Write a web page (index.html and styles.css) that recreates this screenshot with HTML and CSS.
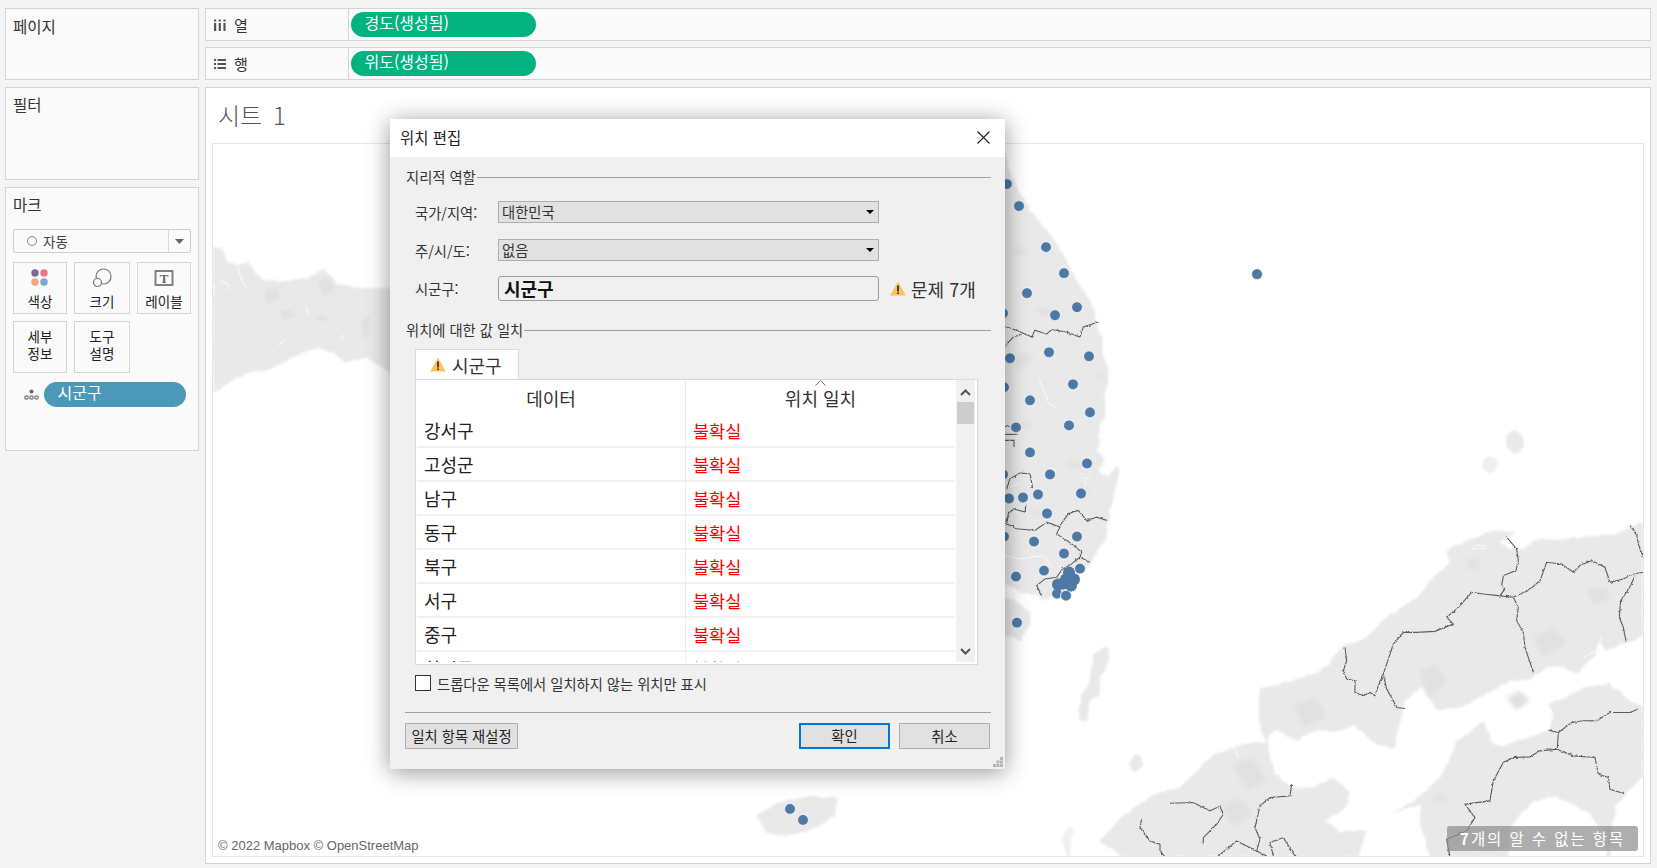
FILE: index.html
```html
<!DOCTYPE html>
<html lang="ko">
<head>
<meta charset="utf-8">
<title>위치 편집</title>
<link rel="stylesheet" href="styles.css">
</head>
<body>
<div class="app">
  <aside class="side">
    <section class="panel pages"><h2 class="panel-title">페이지</h2></section>
    <section class="panel filters"><h2 class="panel-title">필터</h2></section>
    <section class="panel marks">
      <h2 class="panel-title">마크</h2>
      <div class="mark-select">
        <span class="mark-circle"></span><span class="mark-select-text">자동</span>
        <span class="mark-caret"><svg width="9" height="5" viewBox="0 0 9 5"><path class="fill-gray" d="M0 0h9L4.500 5z"/></svg></span>
      </div>
      <div class="mark-grid">
        <div class="mark-btn">
          <svg class="mark-icon" width="20" height="20" viewBox="0 0 20 20"><circle cx="5" cy="5" r="3.700" fill="#7b6a96"/><circle cx="14" cy="5" r="3.700" fill="#f0708a"/><circle cx="5" cy="14" r="3.700" fill="#f2a67c"/><circle cx="14" cy="14" r="3.700" fill="#7fa6cf"/></svg>
          <span>색상</span>
        </div>
        <div class="mark-btn">
          <svg class="mark-icon" width="20" height="20" viewBox="0 0 20 20"><circle class="stroke-gray" cx="11.500" cy="8.500" r="7.500"/><circle class="stroke-gray white" cx="5.500" cy="14.500" r="4"/></svg>
          <span>크기</span>
        </div>
        <div class="mark-btn">
          <svg class="mark-icon" width="20" height="20" viewBox="0 0 20 20"><rect class="stroke-gray thick" x="1.500" y="3" width="17" height="14"/><text class="t-glyph" x="10" y="14.500">T</text></svg>
          <span>레이블</span>
        </div>
        <div class="mark-btn tall"><span>세부<br>정보</span></div>
        <div class="mark-btn tall"><span>도구<br>설명</span></div>
      </div>
      <div class="mark-field">
        <svg width="15" height="11" viewBox="0 0 15 11"><circle class="fill-gray" cx="7.500" cy="2.500" r="2"/><circle class="stroke-gray" cx="2.500" cy="8.500" r="1.700"/><circle class="stroke-gray" cx="7.500" cy="8.500" r="1.700"/><circle class="stroke-gray" cx="12.500" cy="8.500" r="1.700"/></svg>
        <span class="pill blue">시군구</span>
      </div>
    </section>
  </aside>

  <main class="main">
    <div class="shelf">
      <div class="shelf-label">
        <svg width="12" height="12" viewBox="0 0 12 12"><path class="fill-dark" d="M0 4h2.200v8H0zM4.700 4h2.200v8H4.700zM9.400 4h2.200v8H9.400zM0 .5h2.200v2H0zM4.700 .5h2.200v2H4.700zM9.400 .5h2.200v2H9.400z"/></svg>
        <span>열</span>
      </div>
      <span class="pill green">경도(생성됨)</span>
    </div>
    <div class="shelf">
      <div class="shelf-label">
        <svg width="12" height="12" viewBox="0 0 12 12"><path class="fill-dark" d="M0 1h2v2H0zM3.500 1H12v2H3.500zM0 5h2v2H0zM3.500 5H12v2H3.500zM0 9h2v2H0zM3.500 9H12v2H3.500z"/></svg>
        <span>행</span>
      </div>
      <span class="pill green">위도(생성됨)</span>
    </div>
    <section class="view">
      <h1 class="view-title">시트 1</h1>
      <div class="map">
        <svg class="map-svg" viewBox="213 144 1430 711" preserveAspectRatio="none">
          <defs>
            <filter id="soft" x="-5%" y="-5%" width="110%" height="110%"><feTurbulence type="fractalNoise" baseFrequency="0.12" numOctaves="2" seed="3" result="n"/><feDisplacementMap in="SourceGraphic" in2="n" scale="4" xChannelSelector="R" yChannelSelector="G" result="d"/><feGaussianBlur in="d" stdDeviation="0.8"/></filter>
            <filter id="softS" x="-5%" y="-5%" width="110%" height="110%"><feTurbulence type="fractalNoise" baseFrequency="0.04" numOctaves="2" seed="3" result="n"/><feDisplacementMap in="SourceGraphic" in2="n" scale="12" xChannelSelector="R" yChannelSelector="G" result="d"/><feGaussianBlur in="d" stdDeviation="2.400"/></filter>
            <filter id="blob" x="-30%" y="-30%" width="160%" height="160%"><feGaussianBlur stdDeviation="1.800"/></filter>
            <filter id="blobS" x="-30%" y="-30%" width="160%" height="160%"><feGaussianBlur stdDeviation="6"/></filter>
            <filter id="rough" x="-5%" y="-5%" width="110%" height="110%"><feTurbulence type="fractalNoise" baseFrequency="0.12" numOctaves="2" seed="4" result="n"/><feDisplacementMap in="SourceGraphic" in2="n" scale="8" xChannelSelector="R" yChannelSelector="G"/></filter>
          </defs>
          <!-- west coast -->
          <g filter="url(#soft)">
            <path class="land" d="M213 247L222 248 227 263 238 265 247 260 255 272 263 280 287 280 310 277 325 268 331 277 337 283 353 287 388 287 400 300 400 380 368 357 347 363 333 353 317 347 293 357 267 370 250 372 233 380 213 393Z"/>
          </g>
          <g filter="url(#blob)">
            <path class="land-dark" d="M265 290l12-3 3 12-14 4zM317 282l12-6 6 12-10 8zM280 310h12l4 6-14 2zM318 316q8-4 10 2-5 5-11 2zM362 320l8-4-2 22-6-2z"/>
          </g>
          <path class="river" d="M238 268l4 12 4 6M220 280l8 4 2 6M306 306l2 8M340 340l4-6M278 345l8-6"/>
          <!-- Korea -->
          <g transform="translate(1000 130) scale(.3333)">
            <g filter="url(#softS)">
              <path class="land" d="M-30 60L15 80 30 130 60 190 110 265 150 310 190 370 215 425 240 465 265 500 285 545 295 600 307 620 310 680 325 715 325 760 315 790 318 850 300 890 295 960 315 995 295 1020 320 1035 355 1005 360 1020 340 1100 325 1170 320 1225 290 1260 275 1295 240 1330 205 1370 170 1395 130 1410 110 1390 60 1385 20 1360-30 1360Z"/>
              <path class="land" d="M-30 1400L40 1405 85 1440 92 1480 60 1530 30 1515-30 1530Z"/>
            </g>
            <g filter="url(#blobS)">
              <path class="land-dark" d="M30 360q40-20 50 10-30 15-50-10zM110 540q30-20 40 10-20 20-40-10zM40 680q40-20 60-10-10 40-50 50zM290 730q20-5 30 10-10 15-30 5zM50 880q30-10 50 5-20 15-50 5zM200 1000q30-15 50 5-20 20-50-5zM90 1140q30-10 40 15-30 10-40-15zM230 1060q30 0 40 20-20 15-40-20z"/>
            </g>
            <path class="river" d="M118 750l12 30 10 20 6 20 30 15M245 1040q15 5 10 30M270 1040l-15 5M13 1275l50 10 65-10 30 35M30 1070l30-10"/>
          </g>
          <!-- Jeju and small islands -->
          <g filter="url(#soft)">
            <path class="land" d="M757 815L775 802 810 795 838 797 835 815 815 828 785 835 765 832Z"/>
            <ellipse class="land" cx="1515" cy="441" rx="9" ry="11"/>
            <ellipse class="land-light" cx="1490" cy="464" rx="8" ry="8"/>
          </g>
          <g transform="translate(1000 640) scale(.3333)" filter="url(#softS)">
            <path class="land" d="M320 15L332 30 322 70 300 110 300 160 270 180 262 240 235 238 242 165 268 125 280 40Z"/>
            <path class="land" d="M405 340L422 345 430 375 405 395 385 370Z"/>
            <path class="land-light" d="M205 560l15 5-10 80-10 5-15-55z"/>
          </g>
          <!-- Japan -->
          <g transform="translate(1200 510) scale(.3333)">
            <g filter="url(#softS)">
              <path class="land" d="M1330 30L1250 70 1120 82 1000 90 970 115 930 115 900 95 950 65 880 60 800 90 740 120 750 160 700 200 650 260 560 320 500 380 420 410 390 460 340 490 260 515 180 535 175 630 195 690 225 655 290 690 340 660 420 660 460 645 530 700 580 715 605 620 615 570 670 525 710 600 780 590 880 540 930 510 985 510 1040 470 1080 465 1130 490 1180 440 1200 395 1215 420 1330 375Z"/>
              <path class="land" d="M850 630L880 700 905 705 1050 660 1060 610 1045 580 1100 560 1150 530 1230 520 1290 570 1330 590 1330 795 1250 880 1238 950 1232 1038 1222 1038 1215 975 1170 910 1070 855 1000 870 930 950 925 1038 690 1038 660 940 660 880 570 910 640 870 720 800 755 730 770 690 800 670Z"/>
              <path class="land" d="M40 730L130 700 205 690 210 740 225 790 280 830 340 830 400 800 450 840 440 890 375 930 420 960 500 960 475 1038-230 1038-300 990-240 920-140 850-60 830Z"/>
            </g>
            <g filter="url(#blobS)">
              <path class="land-dark" d="M800 150l30-10 10 30-30 10zM660 480l50-20 30 60-60 40zM1160 240l60-10 10 40-50 10zM280 580l70-20 30 60-70 30zM920 560l40-20 30 30-40 30zM100 760l60-20 40 70-60 30zM700 850l35 0 5 20-35 5zM1000 380l60-30 40 50-70 40zM60 880l60-20 40 50-60 40z"/>
            </g>
            <path class="river" d="M815 115h40v-10h-30zM1150 440l40-20 15-40M100 705l15 35"/>
            <g class="borders" filter="url(#rough)">
              <polyline points="920,80 950,115 955,150 948,180 910,195 905,225 915,235 900,255"/>
              <polyline points="435,410 440,450 430,480 440,505 465,510 465,545 490,555 510,545 525,555 535,525 550,490 580,400 610,365 650,365 705,362 760,340 740,320 775,290 815,245 850,250 895,255 940,260 985,240 1020,210 1040,155 1085,160 1120,185 1140,165 1175,150 1215,170 1230,215 1270,205 1300,190 1330,185"/>
              <polyline points="550,490 560,535 580,570 590,590 615,593"/>
              <polyline points="940,260 955,290 950,330 970,365 975,410 985,440 1000,485"/>
              <polyline points="1290,45 1310,70 1315,100 1330,140"/>
              <polyline points="1305,195 1290,230 1262,270 1258,320 1270,350 1278,390"/>
              <polyline points="1315,595 1290,605 1230,605 1190,630 1150,630 1115,635 1075,665 1072,715 1020,720 990,738 940,740 910,755 880,810 870,870 795,880 825,920 800,960 740,985 750,1038"/>
              <polyline points="1045,658 1075,665"/>
              <polyline points="1072,715 1120,735 1185,740 1195,790 1225,800 1230,835 1272,848"/>
              <polyline points="275,820 270,855 210,860 180,885 165,950 180,985 170,1020"/>
              <polyline points="-90,877 -20,875 30,900 60,885 70,910 50,940 10,980 10,1000"/>
              <polyline points="-175,925 -180,950 -150,990 -120,1000 -120,1020 -105,1038"/>
              <polyline points="55,1035 80,1015 110,990 170,1020 200,1035"/>
              <polyline points="220,1035 210,995 250,980 285,1035"/>
            </g>
          </g>
          <g transform="translate(1000 130) scale(.3333)">
            <g class="borders" filter="url(#rough)">
              <polyline points="13,588 50,600 95,620 105,600 140,612 155,598 200,605 240,620 250,590 295,575"/>
              <polyline points="13,650 40,620 65,612"/>
              <polyline points="13,888 28,888"/>
              <polyline points="13,912 50,912"/>
              <polyline points="15,930 42,930 42,950"/>
              <polyline points="20,1075 30,1045 60,1028 90,1030 98,1075"/>
              <polyline points="78,1120 75,1145 40,1135 25,1150 20,1180 50,1195 105,1200 140,1175 180,1190 170,1210 215,1240 245,1265 240,1280 270,1295"/>
              <polyline points="180,1185 205,1150 235,1140 260,1170 290,1160 322,1170"/>
              <polyline points="240,1280 215,1300 185,1318 170,1340 135,1345 110,1365 125,1395"/>
              <polyline points="13,1175 25,1160"/>
            </g>
          </g>
          <!-- marks -->
          <g class="dots">
            <circle cx="1007" cy="184" r="5"/><circle cx="1019" cy="206" r="5"/><circle cx="1046" cy="247" r="5"/><circle cx="1064" cy="273" r="5"/><circle cx="1027" cy="293" r="5"/><circle cx="1055" cy="315" r="5"/><circle cx="1077" cy="307" r="5"/><circle cx="1003" cy="313" r="5"/><circle cx="1010" cy="358" r="5"/><circle cx="1049" cy="352" r="5"/><circle cx="1089" cy="356" r="5"/><circle cx="1073" cy="384" r="5"/><circle cx="1030" cy="400" r="5"/><circle cx="1004" cy="387" r="5"/><circle cx="1090" cy="412" r="5"/><circle cx="1069" cy="425" r="5"/><circle cx="1016" cy="427" r="5"/><circle cx="1030" cy="452" r="5"/><circle cx="1087" cy="463" r="5"/><circle cx="1050" cy="474" r="5"/><circle cx="1003" cy="474" r="5"/><circle cx="1038" cy="494" r="5"/><circle cx="1023" cy="497" r="5"/><circle cx="1009" cy="498" r="5"/><circle cx="1081" cy="493" r="5"/><circle cx="1047" cy="513" r="5"/><circle cx="1004" cy="536" r="5"/><circle cx="1034" cy="541" r="5"/><circle cx="1077" cy="536" r="5"/><circle cx="1064" cy="553" r="5"/><circle cx="1044" cy="570" r="5"/><circle cx="1016" cy="576" r="5"/><circle cx="1080" cy="568" r="5"/><circle cx="1057" cy="593" r="5"/><circle cx="1066" cy="595" r="5"/><circle cx="1017" cy="622" r="5"/><circle cx="1257" cy="274" r="5"/><circle cx="790" cy="808" r="5"/><circle cx="803" cy="819" r="5"/>
          </g>
          <g class="dots cluster">
            <circle cx="1058" cy="584" r="5"/><circle cx="1063" cy="583" r="5"/><circle cx="1066" cy="579" r="5"/><circle cx="1069" cy="572" r="5"/><circle cx="1074" cy="579" r="5"/><circle cx="1069" cy="581" r="5"/><circle cx="1071" cy="585" r="5"/>
          </g>
        </svg>
        <div class="attribution">© 2022 Mapbox © OpenStreetMap</div>
        <div class="unknown-badge"><b>7</b>개의 알 수 없는 항목</div>
      </div>
    </section>
  </main>
</div>

<div class="dialog">
  <header class="dialog-head">
    <span>위치 편집</span>
    <svg width="13" height="13" viewBox="0 0 13 13"><path class="stroke-black" d="M.5.500l12 12M12.500.500l-12 12"/></svg>
  </header>
  <div class="dialog-body">
    <div class="legend">지리적 역할</div>
    <div class="form-row first">
      <label>국가/지역:</label>
      <div class="combo">대한민국<svg width="8" height="4" viewBox="0 0 8 4"><path d="M0 0h8L4 4z"/></svg></div>
    </div>
    <div class="form-row second">
      <label>주/시/도:</label>
      <div class="combo">없음<svg width="8" height="4" viewBox="0 0 8 4"><path d="M0 0h8L4 4z"/></svg></div>
    </div>
    <div class="form-row third">
      <label>시군구:</label>
      <div class="textbox">시군구</div>
      <div class="issue">
        <svg class="warn" width="16" height="15" viewBox="0 0 16 15"><path fill="#fcc25e" d="M8 .500L15.800 14.500H.2z"/><path fill="#222" d="M7.200 4.500h1.600v6H7.200zM7.200 11.500h1.600v1.600H7.200z"/></svg>
        <span>문제 7개</span>
      </div>
    </div>
    <div class="legend second-legend">위치에 대한 값 일치</div>
    <div class="tab">
      <svg class="warn" width="16" height="15" viewBox="0 0 16 15"><path fill="#fcc25e" d="M8 .500L15.800 14.500H.2z"/><path fill="#222" d="M7.200 4.500h1.600v6H7.200zM7.200 11.500h1.600v1.600H7.200z"/></svg>
      <span>시군구</span>
    </div>
    <div class="match-table">
      <div class="match-list">
        <div class="match-head">
          <div>데이터</div>
          <div class="sorted"><svg class="sort-arrow" width="11" height="6" viewBox="0 0 11 6"><path class="stroke-thin" d="M.5 5.500l5-5 5 5"/></svg>위치 일치</div>
        </div>
        <div class="match-row"><div>강서구</div><div class="bad">불확실</div></div>
        <div class="match-row"><div>고성군</div><div class="bad">불확실</div></div>
        <div class="match-row"><div>남구</div><div class="bad">불확실</div></div>
        <div class="match-row"><div>동구</div><div class="bad">불확실</div></div>
        <div class="match-row"><div>북구</div><div class="bad">불확실</div></div>
        <div class="match-row"><div>서구</div><div class="bad">불확실</div></div>
        <div class="match-row"><div>중구</div><div class="bad">불확실</div></div>
        <div class="match-row"><div>창녕군</div><div class="bad">불확실</div></div>
      </div>
      <div class="scrollbar">
        <svg class="scroll-arrow" width="11" height="7" viewBox="0 0 11 7"><path class="stroke-arrow" d="M1 6l4.500-4.500L10 6"/></svg>
        <div class="scroll-thumb"></div>
        <svg class="scroll-arrow down" width="11" height="7" viewBox="0 0 11 7"><path class="stroke-arrow" d="M1 1l4.500 4.500L10 1"/></svg>
      </div>
    </div>
    <div class="check-row"><span class="checkbox"></span><span>드롭다운 목록에서 일치하지 않는 위치만 표시</span></div>
    <div class="rule"></div>
    <div class="actions">
      <button class="btn reset" type="button">일치 항목 재설정</button>
      <div class="actions-right">
        <button class="btn ok" type="button">확인</button>
        <button class="btn" type="button">취소</button>
      </div>
    </div>
    <svg class="grip" width="10" height="10" viewBox="0 0 10 10"><path fill="#b5b5b5" d="M7 0h3v3H7zM3.500 3.500h3v3h-3zM7 3.500h3v3H7zM0 7h3v3H0zM3.500 7h3v3h-3zM7 7h3v3H7z"/></svg>
  </div>
</div>
</body>
</html>
```

FILE: styles.css
```css
* { box-sizing: border-box; }
html, body { margin: 0; height: 100%; overflow: hidden; }
body {
  background: #f4f4f4;
  color: #222;
  font-family: "Noto Sans CJK KR", "Noto Sans", sans-serif;
  position: relative;
}
.app {
  display: flex;
  gap: 6px;
  height: 864px;
  padding: 8px 6px 0 5px;
}
.side { width: 194px; display: flex; flex-direction: column; gap: 7px; flex: none; }
.panel { background: #fafafa; border: 1px solid #d4d4d4; padding: 6px 7px; }
.pages { height: 72px; padding-top: 7px; }
.filters { height: 93px; }
.marks { height: 264px; }
.panel-title { margin: 0; font-size: 15.500px; font-weight: 400; line-height: 21px; color: #333; }

.mark-select {
  margin-top: 14px;
  height: 24px;
  width: 178px;
  border: 1px solid #cfcfcf;
  border-radius: 2px;
  display: flex;
  align-items: center;
  padding-left: 13px;
  font-size: 13.500px;
  color: #444;
}
.mark-circle { width: 10px; height: 10px; border: 1.500px solid #8c8c8c; border-radius: 50%; }
.mark-select-text { margin-left: 6px; line-height: 20px; }
.mark-caret {
  margin-left: auto;
  width: 22px;
  height: 100%;
  border-left: 1px solid #d8d8d8;
  display: flex;
  align-items: center;
  justify-content: center;
}
.mark-grid {
  display: grid;
  grid-template-columns: 54px 56px 54px;
  grid-auto-rows: 52px;
  gap: 7px;
  margin-top: 9px;
}
.mark-btn {
  border: 1px solid #d4d4d4;
  font-size: 13.500px;
  line-height: 18px;
  color: #222;
  text-align: center;
  display: flex;
  flex-direction: column;
  align-items: center;
  padding-top: 5px;
}
.mark-btn span { margin-top: 4px; }
.mark-btn.tall { justify-content: center; padding: 0 0 8px; line-height: 17.500px; }
.mark-icon { display: block; }
.mark-field { display: flex; align-items: center; gap: 5px; margin-top: 9px; padding-left: 11px; }

.pill {
  display: block;
  border-radius: 13px;
  color: #fff;
  font-size: 16px;
  line-height: 20px;
  height: 25px;
  padding: 0 13.500px 5px;
}
.pill.green { background: #02b27f; width: 185px; margin-left: 2px; }
.pill.blue { background: #4c98b8; width: 142px; height: 25px; }

.main { flex: 1; display: flex; flex-direction: column; gap: 6px; min-width: 0; }
.shelf {
  height: 33px;
  background: #fafafa;
  border: 1px solid #d4d4d4;
  display: flex;
  align-items: center;
}
.shelf-label {
  width: 143px;
  height: 100%;
  border-right: 1px solid #d4d4d4;
  display: flex;
  align-items: center;
  gap: 8px;
  padding-left: 8px;
  font-size: 15px;
  color: #333;
}
.view {
  flex: 1;
  margin-top: 1px;
  background: #fff;
  border: 1px solid #d4d4d4;
  display: flex;
  flex-direction: column;
  padding: 0 6px 6px;
  min-height: 0;
}
.view-title {
  margin: 0;
  height: 55px;
  padding: 8px 0 0 6px;
  font-size: 24px;
  line-height: 38px;
  font-weight: 300;
  word-spacing: 4px;
  color: #555;
}
.map { flex: 1; position: relative; border: 1px solid #e6e6e6; overflow: hidden; }
.map-svg { position: absolute; inset: 0; width: 100%; height: 100%; display: block; }
.land { fill: #e9e9e9; }
.land-dark { fill: #e1e1e1; }
.land-light { fill: #f0f0f0; }
.river { fill: none; stroke: #fff; stroke-width: 1; stroke-opacity: .8; vector-effect: non-scaling-stroke; }
.borders polyline { fill: none; stroke: #5c5c5c; stroke-width: 1.100; vector-effect: non-scaling-stroke; }
.dots circle { r: 5.500px; fill: #4e79a7; stroke: rgba(255,255,255,.7); stroke-width: 1.200; }
.dots.cluster circle { stroke: none; r: 6px; }
.attribution {
  position: absolute;
  left: 3px;
  bottom: 0;
  height: 21px;
  padding: 0 2px;
  background: rgba(255,255,255,.75);
  font-family: "Liberation Sans", Arial, sans-serif;
  font-size: 13px;
  line-height: 22px;
  color: #666;
}
.unknown-badge {
  position: absolute;
  right: 5px;
  bottom: 5px;
  width: 191px;
  height: 25px;
  background: rgba(135,135,135,.68);
  border-radius: 3px;
  color: #fff;
  font-size: 15.500px;
  line-height: 24px;
  letter-spacing: 1.900px;
  text-align: center;
}

.stroke-gray { fill: none; stroke: #777; stroke-width: 1.200; }
.stroke-gray.white { fill: #fafafa; }
.stroke-gray.thick { stroke-width: 2; stroke: #808080; }
.fill-gray { fill: #666; }
.fill-dark { fill: #555; }
.t-glyph { font-family: "Liberation Serif", serif; font-size: 13px; font-weight: 700; text-anchor: middle; fill: #666; }
.stroke-black { fill: none; stroke: #222; stroke-width: 1.100; }
.stroke-thin { fill: none; stroke: #777; stroke-width: 1; }
.stroke-arrow { fill: none; stroke: #555; stroke-width: 2; }

.dialog {
  position: absolute;
  left: 390px;
  top: 119px;
  width: 615px;
  height: 650px;
  background: #f0f0f0;
  box-shadow: 0 3px 22px rgba(0,0,0,.42);
  display: flex;
  flex-direction: column;
  font-size: 14px;
}
.dialog-head {
  height: 38px;
  background: #fff;
  display: flex;
  align-items: center;
  justify-content: space-between;
  padding: 0 15px 2px 10px;
  font-size: 15.500px;
  flex: none;
}
.dialog-body { position: relative; flex: 1; padding: 11px 14px 0 15px; }
.legend {
  display: flex;
  align-items: center;
  gap: 1px;
  height: 18px;
  padding-left: 1px;
  font-size: 14.300px;
  line-height: 18px;
  color: #333;
}
.legend::after { content: ""; flex: 1; height: 1px; background: #a0a0a0; }
.second-legend { margin-top: 20px; }
.form-row { display: flex; align-items: center; padding-left: 10px; color: #333; }
.form-row label { width: 83px; font-size: 14.300px; }
.form-row.first { margin-top: 15px; height: 22px; }
.form-row.second { margin-top: 16px; height: 22px; }
.form-row.third { margin-top: 15px; height: 25px; }
.combo {
  position: relative;
  width: 381px;
  height: 100%;
  background: #e1e1e1;
  border: 1px solid #adadad;
  padding-left: 3px;
  font-size: 14.300px;
  line-height: 18px;
  display: flex;
  align-items: center;
  justify-content: space-between;
  padding-right: 4px;
}
.textbox {
  width: 381px;
  height: 100%;
  border: 1px solid #9c9c9c;
  border-radius: 3px;
  padding-left: 5px;
  font-size: 18px;
  font-weight: 700;
  line-height: 22px;
  color: #111;
}
.issue { display: flex; align-items: center; gap: 5px; margin-left: 11px; font-size: 18px; line-height: 24px; color: #333; }
.tab {
  margin: 10px 0 0 10px;
  width: 104px;
  height: 30px;
  background: #fff;
  border: 1px solid #d9d9d9;
  border-bottom: 0;
  display: flex;
  align-items: center;
  gap: 6px;
  padding-left: 14px;
  font-size: 18px;
  color: #333;
  position: relative;
}
.warn { flex: none; }
.match-table {
  margin-left: 10px;
  width: 563px;
  height: 286px;
  background: #fff;
  border: 1px solid #d9d9d9;
  display: flex;
  padding: 0 2px 2px 1px;
}
.match-list { flex: 1; overflow: hidden; min-width: 0; }
.match-head, .match-row { display: grid; grid-template-columns: 268px 270px; font-size: 18px; }
.match-head { height: 34px; line-height: 37px; text-align: center; color: #333; }
.match-head > div + div, .match-row > div + div { border-left: 1px solid #ececec; }
.sorted { position: relative; }
.sort-arrow { position: absolute; left: 129px; top: 0; }
.match-row { height: 34px; line-height: 33px; border-bottom: 2px solid #f0f0f0; color: #222; }
.match-row > div { padding-left: 7px; }
.bad { color: #f00; font-size: 17.500px; }
.scrollbar {
  width: 19px;
  margin-left: 2px;
  background: #f0f0f0;
  position: relative;
  display: flex;
  flex-direction: column;
  align-items: center;
}
.scroll-arrow { position: absolute; top: 9px; left: 4px; }
.scroll-arrow.down { top: auto; bottom: 7px; }
.scroll-thumb { width: 17px; height: 22px; margin-top: 22px; background: #cdcdcd; }
.check-row { display: flex; align-items: center; gap: 6px; margin: 10px 0 0 10px; height: 16px; font-size: 14.300px; color: #333; }
.checkbox { width: 16px; height: 16px; background: #fff; border: 1px solid #333; }
.rule { margin-top: 21px; height: 1px; background: #a0a0a0; }
.actions { display: flex; justify-content: space-between; margin-top: 10px; padding-right: 1px; }
.actions-right { display: flex; gap: 9px; }
.btn {
  width: 91px;
  height: 26px;
  padding: 0;
  background: #e1e1e1;
  border: 1px solid #adadad;
  font-family: inherit;
  font-size: 14.300px;
  line-height: 20px;
  color: #222;
}
.btn.reset { width: 113px; }
.btn.ok { border: 2px solid #0078d7; }
.grip { position: absolute; right: 2px; bottom: 2px; }
```
